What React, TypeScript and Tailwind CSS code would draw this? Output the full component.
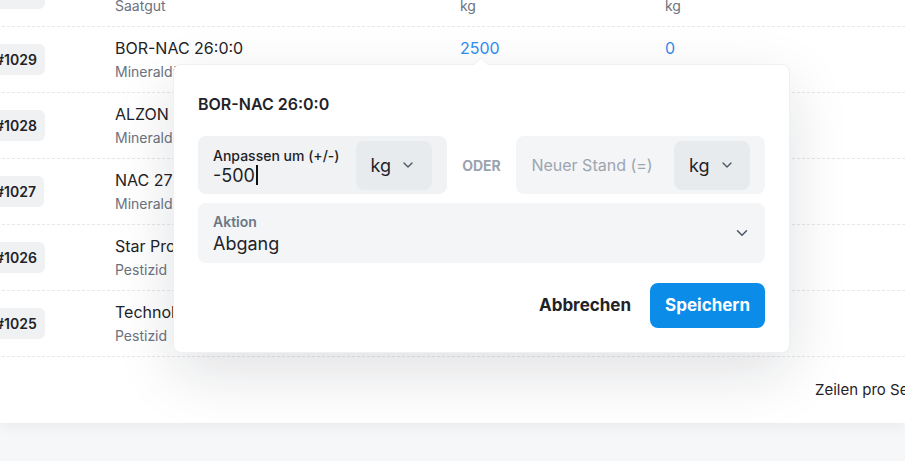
import { ChevronDown } from "lucide-react";

const rows = [
  { id: "1030", name: "Kartoffel Agria", type: "Saatgut", stock: "1200", min: "200" },
  { id: "1029", name: "BOR-NAC 26:0:0", type: "Mineraldünger", stock: "2500", min: "0" },
  { id: "1028", name: "ALZON 46", type: "Mineraldünger", stock: "1800", min: "0" },
  { id: "1027", name: "NAC 27", type: "Mineraldünger", stock: "3200", min: "0" },
  { id: "1026", name: "Star Pro", type: "Pestizid", stock: "40", min: "0" },
  { id: "1025", name: "Technokill", type: "Pestizid", stock: "25", min: "0" },
];

function UnitSelect() {
  return (
    <div className="flex h-[49px] w-[76px] shrink-0 items-center gap-[9px] rounded-lg bg-[#e8ebee] pl-[15px] text-[18px] text-[#1f2328]">
      <span>kg</span>
      <ChevronDown className="h-4 w-4 text-[#4b5563]" strokeWidth={2} />
    </div>
  );
}

export default function App() {
  return (
    <div
      className="relative h-[461px] w-[905px] overflow-hidden bg-[#f6f7f8]"
      style={{ fontFamily: "Inter, 'Noto Sans', sans-serif" }}
    >
      <div className="h-[423px] overflow-hidden bg-white shadow-[0_4px_12px_rgba(0,0,0,0.05)]">
        <div className="-mt-[39px] -ml-[13px]">
          {rows.map((r) => (
            <div
              key={r.id}
              className="flex h-[66px] items-center border-b border-dashed border-[#e5e7eb]"
            >
              <div className="w-[128px] shrink-0">
                <span className="inline-block rounded-md bg-[#eff1f3] px-2 py-[5px] text-[14px] font-semibold text-[#1f2328]">
                  #{r.id}
                </span>
              </div>
              <div className="w-[345px] shrink-0">
                <div className="text-[16px] leading-[22px] text-[#1f2328]">{r.name}</div>
                <div className="mt-[3px] text-[14px] leading-[20px] text-[#6b7280]">{r.type}</div>
              </div>
              <div className="w-[205px] shrink-0">
                <div className="text-[16px] leading-[22px] text-[#2f8cef]">{r.stock}</div>
                <div className="mt-[3px] text-[14px] leading-[20px] text-[#6b7280]">kg</div>
              </div>
              <div className="w-[200px] shrink-0">
                <div className="text-[16px] leading-[22px] text-[#2f8cef]">{r.min}</div>
                <div className="mt-[3px] text-[14px] leading-[20px] text-[#6b7280]">kg</div>
              </div>
            </div>
          ))}
          <div className="flex h-[66px] items-center">
            <span className="ml-[828px] shrink-0 whitespace-nowrap text-[15px] text-[#1f2328]">
              Zeilen pro Seite
            </span>
          </div>
        </div>
      </div>

      {/* popover */}
      <div className="absolute left-[173px] top-[64px] w-[617px] rounded-lg border border-[#eef0f2] bg-white px-6 pb-6 pt-[28px] shadow-[0_20px_60px_rgba(15,23,42,0.13)]">
        <div className="absolute -top-[6px] left-[302px] h-[10px] w-[10px] rotate-45 border-l border-t border-[#eef0f2] bg-white" />
        <div className="text-[16px] font-semibold leading-[22px] text-[#1f2328]">BOR-NAC 26:0:0</div>

        <div className="mt-[21px] flex items-center">
          <div className="flex h-[58px] w-[249px] items-center justify-between rounded-lg bg-[#f0f2f4] pl-[15px] pr-[15px]">
            <div className="flex flex-col pt-[3px]">
              <span className="text-[14px] font-medium leading-[17px] text-[#1f2328]">Anpassen um (+/-)</span>
              <span className="flex items-center text-[18px] leading-[23px] text-[#1f2328]">
                -500<span className="ml-[1px] inline-block h-[20px] w-[2px] bg-[#111]" />
              </span>
            </div>
            <UnitSelect />
          </div>
          <div className="w-[70px] text-center text-[14px] font-bold text-[#9aa3ae]">ODER</div>
          <div className="flex h-[58px] w-[249px] items-center justify-between rounded-lg bg-[#f4f5f7] pl-[15px] pr-[15px]">
            <span className="text-[16px] text-[#9ca5b0]">Neuer Stand (=)</span>
            <UnitSelect />
          </div>
        </div>

        <div className="mt-[9px] flex h-[60px] items-center justify-between rounded-lg bg-[#f3f5f7] pl-[15px] pr-[14px]">
          <div className="flex flex-col pt-[4px]">
            <span className="text-[14px] font-semibold leading-[18px] text-[#6b7785]">Aktion</span>
            <span className="text-[18px] leading-[26px] text-[#1f2328]">Abgang</span>
          </div>
          <ChevronDown className="h-[18px] w-[18px] text-[#4b5563]" strokeWidth={2} />
        </div>

        <div className="mt-[20px] flex items-center justify-end gap-[19px]">
          <button className="text-[17px] font-bold text-[#1f2328]">Abbrechen</button>
          <button className="h-[45px] rounded-lg bg-[#0b8ce9] px-[15px] text-[17px] font-bold text-white">
            Speichern
          </button>
        </div>
      </div>
    </div>
  );
}
